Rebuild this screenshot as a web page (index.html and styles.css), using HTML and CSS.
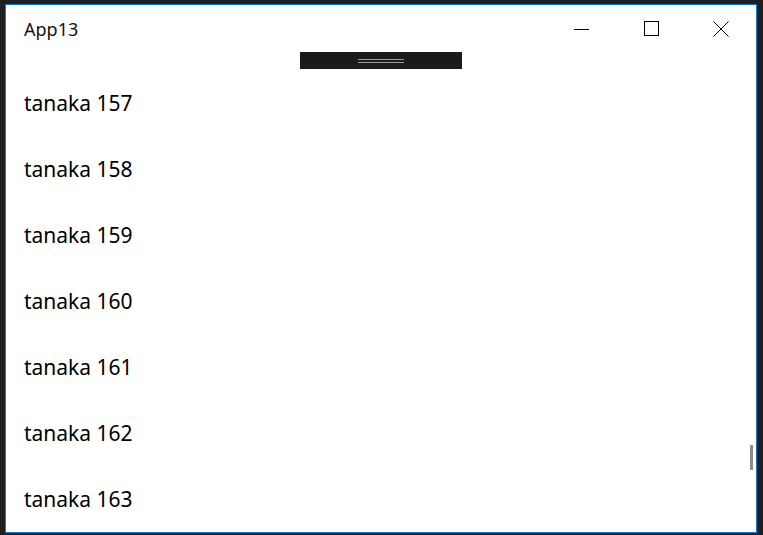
FILE: index.html
```html
<!DOCTYPE html>
<html lang="en">
<head>
  <meta charset="UTF-8" />
  <title>App13</title>
  <link rel="stylesheet" href="styles.css">
</head>
<body>
  <div class="window">
    <header class="titlebar">
      <div class="title">App13</div>
      <div class="caption">
        <button class="cap-btn" aria-label="Minimize">
          <svg width="16" height="16" viewBox="0 0 16 16"><path d="M0 8.5H15" stroke="#000" stroke-width="1" fill="none"/></svg>
        </button>
        <button class="cap-btn" aria-label="Maximize">
          <svg width="16" height="16" viewBox="0 0 16 16"><rect x="0.5" y="0.5" width="14" height="14" stroke="#000" stroke-width="1" fill="none"/></svg>
        </button>
        <button class="cap-btn" aria-label="Close">
          <svg width="16" height="16" viewBox="0 0 16 16"><path d="M0.5 0.5L15.5 15.5M15.5 0.5L0.5 15.5" stroke="#000" stroke-width="1" fill="none"/></svg>
        </button>
      </div>
    </header>

    <div class="handle-row">
      <div class="handle"><span class="grip"></span></div>
    </div>

    <ul class="list">
      <li>tanaka 157</li>
      <li>tanaka 158</li>
      <li>tanaka 159</li>
      <li>tanaka 160</li>
      <li>tanaka 161</li>
      <li>tanaka 162</li>
      <li>tanaka 163</li>
    </ul>

    <div class="thumb"></div>
  </div>
</body>
</html>
```

FILE: styles.css
```css
* {
  margin: 0;
  padding: 0;
  box-sizing: border-box;
}

html, body {
  height: 100%;
}

body {
  background: #1f1f1f;
  font-family: "Noto Sans", "Open Sans", sans-serif;
  color: #000;
  padding: 4px 6px 2px 5px;
  overflow: hidden;
}

.window {
  position: relative;
  width: 752px;
  height: 529px;
  background: #fff;
  border: 1px solid #0a7ad4;
  overflow: hidden;
  display: flex;
  flex-direction: column;
}

.titlebar {
  height: 47px;
  display: flex;
  align-items: center;
  justify-content: space-between;
  flex-shrink: 0;
}

.title {
  font-size: 18px;
  padding-left: 18px;
  color: #111;
}

.caption {
  display: flex;
  height: 100%;
  padding-right: 1px;
}

.cap-btn {
  width: 69px;
  height: 100%;
  border: none;
  background: transparent;
  display: flex;
  align-items: center;
  justify-content: center;
}

.cap-btn:first-child {
  padding-right: 2px;
}

.handle-row {
  height: 17px;
  display: flex;
  justify-content: center;
  flex-shrink: 0;
}

.handle {
  width: 162px;
  height: 17px;
  background: #1b1b1b;
  display: flex;
  align-items: center;
  justify-content: center;
}

.grip {
  width: 46px;
  height: 4px;
  border-top: 1px solid #9a9a9a;
  border-bottom: 1px solid #9a9a9a;
}

.list {
  list-style: none;
}

.list li {
  height: 66px;
  display: flex;
  align-items: center;
  padding-left: 18px;
  padding-top: 2px;
  font-size: 21px;
}

.thumb {
  position: absolute;
  right: 3px;
  top: 440px;
  width: 3px;
  height: 25px;
  background: #8a8a8a;
}
```
